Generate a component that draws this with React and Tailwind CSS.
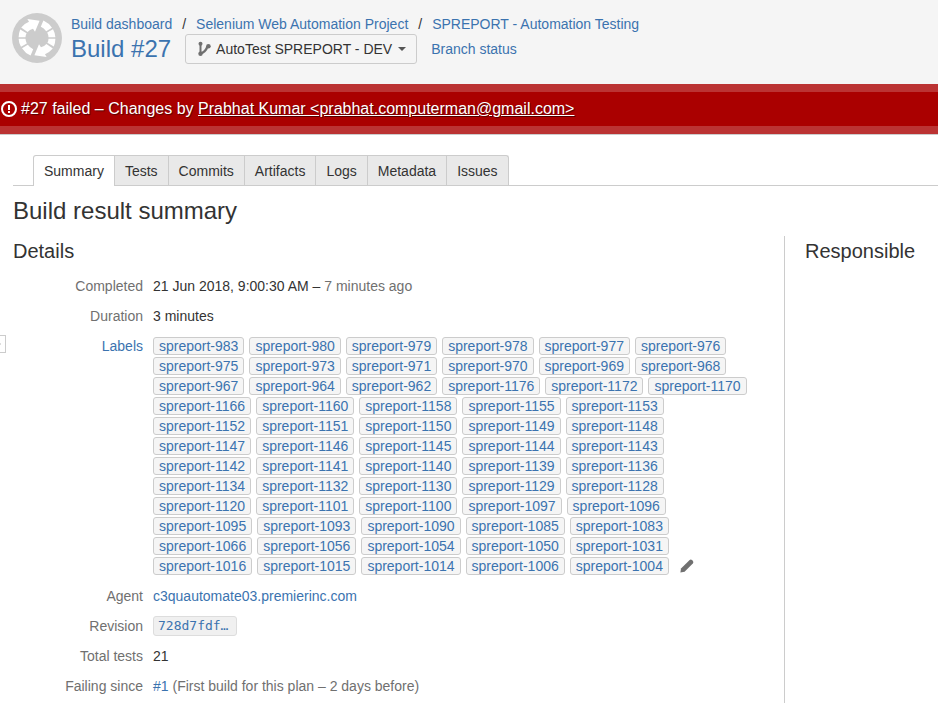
import React from 'react';

const crumbs = ['Build dashboard', 'Selenium Web Automation Project', 'SPREPORT - Automation Testing'];

const tabs = ['Summary', 'Tests', 'Commits', 'Artifacts', 'Logs', 'Metadata', 'Issues'];

const labels = [
  983, 980, 979, 978, 977, 976, 975, 973, 971, 970, 969, 968, 967, 964, 962, 1176, 1172, 1170,
  1166, 1160, 1158, 1155, 1153, 1152, 1151, 1150, 1149, 1148, 1147, 1146, 1145, 1144, 1143,
  1142, 1141, 1140, 1139, 1136, 1134, 1132, 1130, 1129, 1128, 1120, 1101, 1100, 1097, 1096,
  1095, 1093, 1090, 1085, 1083, 1066, 1056, 1054, 1050, 1031, 1016, 1015, 1014, 1006, 1004,
];

const ProjectLogo = () => (
  <svg viewBox="0 0 50 50" className="h-[50px] w-[50px] shrink-0" aria-hidden="true">
    <circle cx="25" cy="25" r="25" fill="#cccccc" />
    {[0, 180].map((angle) => (
      <g key={angle} transform={`rotate(${angle} 25 25)`} fill="#fff">
        <path d="M9.2 14.4 Q12.4 10.6 17 8.8 L15.4 6 L27.6 7.8 L23 18.8 L21 15.8 Q17.6 16.6 15.6 19 Z" />
        <path d="M8.2 16.4 L14.6 20.2 Q13.5 22 13.5 24.2 L6.6 24.2 Q6.7 20 8.2 16.4 Z" />
        <path d="M6.6 25.8 L13.5 25.8 Q13.7 28.4 14.8 30.4 L9 33.8 Q6.8 30 6.6 25.8 Z" />
        <path d="M10 35.2 L15.8 31.8 Q18 34.8 21.2 36.2 L18.6 42.6 Q13.2 40.2 10 35.2 Z" />
      </g>
    ))}
  </svg>
);

const BranchIcon = () => (
  <svg viewBox="0 0 16 16" className="h-4 w-4" fill="#707070" aria-hidden="true">
    <path d="M4.5 3 V12.5" fill="none" stroke="#707070" strokeWidth="2" />
    <path d="M4.5 12.5 C8 11.5 10 10 11.4 5.5" fill="none" stroke="#707070" strokeWidth="2.4" />
    <circle cx="4.5" cy="2.8" r="2" />
    <circle cx="4.5" cy="12.8" r="2.2" />
    <circle cx="12.4" cy="5.2" r="2.3" />
  </svg>
);

const FailedIcon = () => (
  <svg viewBox="0 0 18 18" className="h-[18px] w-[18px]" aria-hidden="true">
    <circle cx="9" cy="9" r="7" fill="none" stroke="#fff" strokeWidth="2" />
    <path d="M8 5 H10 V10 H8 Z M8 11 H10 V13 H8 Z" fill="#fff" />
  </svg>
);

const PencilIcon = () => (
  <svg viewBox="0 0 16 16" className="h-4 w-4" fill="#707070" aria-hidden="true">
    <path d="M1.4 14.4 L2 10.4 L10.4 2.2 Q11.8 1 13.2 2.2 L13.8 2.8 Q15 4.2 13.8 5.6 L5.6 13.8 Z" />
  </svg>
);

const Detail = ({ name, children }) => (
  <div className="flex gap-[10px]">
    <dt className="w-[130px] shrink-0 text-right text-[#707070]">{name}</dt>
    <dd className="min-w-0 flex-1">{children}</dd>
  </div>
);

const App = () => {
  return (
    <div className="relative min-h-screen overflow-hidden bg-white font-['Liberation_Sans',Arial,sans-serif] text-sm leading-5 text-[#333333]">
      <header className="flex h-[84px] gap-[9px] bg-[#f5f5f5] pt-[13px] pl-3">
        <ProjectLogo />
        <div>
          <nav className="flex gap-[10px] pt-px text-[#3b73af]">
            {crumbs.map((crumb, i) => (
              <React.Fragment key={crumb}>
                {i > 0 && <span className="text-[#333333]">/</span>}
                <a href="#" className="whitespace-nowrap">{crumb}</a>
              </React.Fragment>
            ))}
          </nav>
          <div className="flex items-center">
            <h1 className="text-2xl leading-[30px] text-[#3b73af]">
              <a href="#">Build #27</a>
            </h1>
            <button
              type="button"
              className="ml-[14px] flex h-[30px] items-center rounded-[3px] border border-[#cccccc] px-[10px] whitespace-nowrap"
            >
              <BranchIcon />
              <span className="ml-1">AutoTest SPREPORT - DEV</span>
              <svg viewBox="0 0 8 4" className="ml-[6px] h-1 w-2" fill="#555555" aria-hidden="true">
                <path d="M0 0 H8 L4 4 Z" />
              </svg>
            </button>
            <a href="#" className="ml-[14px] whitespace-nowrap text-[#3b73af]">Branch status</a>
          </div>
        </div>
      </header>

      <div className="border-b border-[#cccccc]">
        <p className="flex h-[50px] items-center gap-[3px] border-y-8 border-[#bb3333] bg-[#aa0000] text-base text-white [text-shadow:1px_1px_1px_#550000]">
          <FailedIcon />
          <span>
            #27 failed – Changes by{' '}
            <a href="#" className="underline">Prabhat Kumar &lt;prabhat.computerman@gmail.com&gt;</a>
          </span>
        </p>
      </div>

      <main className="pt-5 pl-[13px]">
        <nav className="flex border-b border-[#cccccc] pl-5">
          {tabs.map((tab, i) => (
            <a
              key={tab}
              href="#"
              className={
                i === 0
                  ? '-mb-px rounded-tl-[3px] border border-b-0 border-[#cccccc] bg-white px-[10px] py-[5px]'
                  : 'border-t border-r border-[#cccccc] bg-[#e9e9e9] px-[10px] pt-[5px] pb-1 last:rounded-tr-[3px]'
              }
            >
              {tab}
            </a>
          ))}
        </nav>

        <h2 className="mt-[10px] text-2xl leading-[30px]">Build result summary</h2>

        <div className="mt-[10px] flex">
          <section className="flex-1 pr-5 pb-5">
            <h3 className="text-xl leading-[30px]">Details</h3>
            <dl className="mt-[10px] flex flex-col gap-[10px]">
              <Detail name="Completed">
                21 Jun 2018, 9:00:30 AM – <span className="text-[#707070]">7 minutes ago</span>
              </Detail>
              <Detail name="Duration">3 minutes</Detail>
              <Detail name={<a href="#" className="text-[#3b73af]">Labels</a>}>
                <ul className="flex flex-wrap items-center gap-x-[5px]">
                  {labels.map((label) => (
                    <li key={label} className="flex h-5 items-center">
                      <a
                        href="#"
                        className="rounded-[3px] border border-[#cccccc] bg-[#f5f5f5] px-[5px] leading-4 text-[#3b73af]"
                      >
                        spreport-{label}
                      </a>
                    </li>
                  ))}
                  <li className="ml-[5px] flex h-5 items-center">
                    <button type="button" aria-label="Edit labels">
                      <PencilIcon />
                    </button>
                  </li>
                </ul>
              </Detail>
              <Detail name="Agent">
                <a href="#" className="text-[#3b73af]">c3quautomate03.premierinc.com</a>
              </Detail>
              <Detail name="Revision">
                <a
                  href="#"
                  className="block h-5 w-[84px] rounded-[3px] border border-[#dddddd] bg-[#f0f0f0] px-1 font-['DejaVu_Sans_Mono',monospace] text-[13px] leading-[18px] text-[#3b73af]"
                >
                  728d7fdf…
                </a>
              </Detail>
              <Detail name="Total tests">21</Detail>
              <Detail name="Failing since">
                <a href="#" className="text-[#3b73af]">#1</a>{' '}
                <span className="text-[#707070]">(First build for this plan – 2 days before)</span>
              </Detail>
            </dl>
          </section>
          <aside className="w-[154px] shrink-0 border-l border-[#cccccc] pl-5">
            <h3 className="text-xl leading-[30px]">Responsible</h3>
          </aside>
        </div>
      </main>

      <button
        type="button"
        aria-label="Expand sidebar"
        className="absolute top-[335px] -left-3 flex h-[18px] w-[18px] items-center justify-end border border-[#cccccc] bg-white pr-1"
      >
        <span className="h-[2px] w-[2px] bg-[#dddddd]" />
      </button>
    </div>
  );
};

export default App;
